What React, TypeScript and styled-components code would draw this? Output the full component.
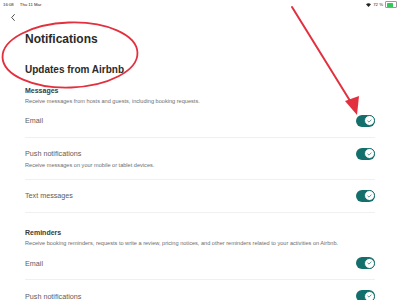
import React from "react";
import styled, { createGlobalStyle } from "styled-components";

const GlobalStyle = createGlobalStyle`
  html, body {
    margin: 0;
    padding: 0;
    background: #ffffff;
    font-family: "Liberation Sans", Arial, sans-serif;
    overflow: hidden;
  }
`;

const Screen = styled.div`
  position: relative;
  width: 400px;
  height: 300px;
  overflow: hidden;
  background: #ffffff;
`;

const StatusBar = styled.div`
  height: 9px;
  padding: 0 3px;
  display: flex;
  align-items: center;
  justify-content: space-between;
  font-size: 4.3px;
  color: #222222;
`;

const StatusLeft = styled.div`
  display: flex;
  gap: 6px;
`;

const StatusRight = styled.div`
  display: flex;
  align-items: center;
  gap: 2px;
`;

const Battery = styled.div`
  width: 9px;
  height: 4px;
  border: 0.5px solid #9a9a9a;
  border-radius: 1px;
  padding: 0.5px;
  display: flex;
  &::before {
    content: "";
    width: 72%;
    background: #34c759;
    border-radius: 0.5px;
  }
`;

const BackRow = styled.div`
  height: 16px;
  padding-left: 11px;
  display: flex;
  align-items: center;
`;

const Content = styled.div`
  padding: 0 25px;
`;

const Title = styled.h1`
  margin: 7px 0 0;
  font-size: 12px;
  line-height: 14px;
  font-weight: 700;
  color: #2a2a2a;
`;

const Subtitle = styled.h2`
  margin: 18px 0 0;
  font-size: 10px;
  line-height: 12px;
  font-weight: 700;
  color: #2a2a2a;
`;

const SectionTitle = styled.h3<{ $gap: number }>`
  margin: ${(p) => p.$gap}px 0 0;
  font-size: 7px;
  line-height: 9px;
  font-weight: 700;
  color: #3a3a3a;
`;

const Desc = styled.p<{ $top: number }>`
  margin: ${(p) => p.$top}px 0 0;
  font-size: 5.6px;
  line-height: 7px;
  color: #6e6e6e;
  white-space: nowrap;
`;

const Item = styled.div`
  padding: 10px 0;
  border-bottom: 1px solid #f0f0f0;
`;

const ItemMain = styled.div`
  height: 12px;
  display: flex;
  align-items: center;
  justify-content: space-between;
`;

const Label = styled.span`
  font-size: 7.2px;
  color: #5c5c5c;
`;

const Track = styled.div`
  width: 19px;
  height: 12px;
  border-radius: 6px;
  background: #136f6b;
  display: flex;
  align-items: center;
  justify-content: flex-end;
  padding-right: 0.5px;
  box-sizing: border-box;
`;

const Knob = styled.div`
  width: 11px;
  height: 11px;
  border-radius: 50%;
  background: #ffffff;
  border: 0.6px solid #136f6b;
  box-sizing: border-box;
  display: flex;
  align-items: center;
  justify-content: center;
`;

const Overlay = styled.svg`
  position: absolute;
  left: 0;
  top: 0;
  pointer-events: none;
`;

const Toggle = () => (
  <Track>
    <Knob>
      <svg width="5" height="4" viewBox="0 0 5 4">
        <path d="M0.8 2 L2 3.1 L4.2 0.9" fill="none" stroke="#136f6b" strokeWidth="0.7" strokeLinecap="round" strokeLinejoin="round" />
      </svg>
    </Knob>
  </Track>
);

const Row = ({ label, desc }: { label: string; desc?: string }) => (
  <Item>
    <ItemMain>
      <Label>{label}</Label>
      <Toggle />
    </ItemMain>
    {desc && <Desc $top={2}>{desc}</Desc>}
  </Item>
);

const App = () => (
  <Screen>
    <GlobalStyle />
    <StatusBar>
      <StatusLeft>
        <span>16:08</span>
        <span>Thu 11 Mar</span>
      </StatusLeft>
      <StatusRight>
        <svg width="5" height="4" viewBox="0 0 10 8">
          <path d="M5 8 L0 2.5 A7.5 7.5 0 0 1 10 2.5 Z" fill="#222" />
        </svg>
        <span>72 %</span>
        <Battery />
      </StatusRight>
    </StatusBar>
    <BackRow>
      <svg width="4" height="7" viewBox="0 0 4 7">
        <path d="M3.4 0.5 L0.7 3.5 L3.4 6.5" fill="none" stroke="#222" strokeWidth="0.8" strokeLinecap="round" strokeLinejoin="round" />
      </svg>
    </BackRow>
    <Content>
      <Title>Notifications</Title>
      <Subtitle>Updates from Airbnb</Subtitle>
      <SectionTitle $gap={9.5}>Messages</SectionTitle>
      <Desc $top={3}>Receive messages from hosts and guests, including booking requests.</Desc>
      <Row label="Email" />
      <Row label="Push notifications" desc="Receive messages on your mobile or tablet devices." />
      <Row label="Text messages" />
      <SectionTitle $gap={15.5}>Reminders</SectionTitle>
      <Desc $top={3}>
        Receive booking reminders, requests to write a review, pricing notices, and other reminders related to your activities on Airbnb.
      </Desc>
      <Row label="Email" />
      <Row label="Push notifications" />
    </Content>
    <Overlay width="400" height="300" viewBox="0 0 400 300">
      <ellipse cx="70" cy="55" rx="67.5" ry="32.5" fill="none" stroke="#e3303f" strokeWidth="1.8" transform="rotate(-2 70 55)" />
      <line x1="292" y1="7" x2="352" y2="104" stroke="#e3303f" strokeWidth="2" strokeLinecap="round" />
      <polygon points="357,115 345,101 359,96" fill="#e3303f" />
    </Overlay>
  </Screen>
);

export default App;
